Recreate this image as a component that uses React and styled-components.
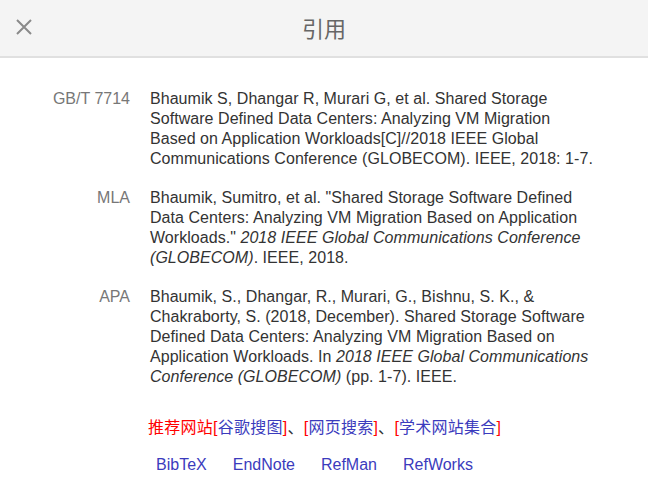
import styled, { createGlobalStyle } from "styled-components";

const GlobalStyle = createGlobalStyle`
  body {
    margin: 0;
    background: #fff;
    font-family: "Liberation Sans", Arial, "Noto Sans CJK SC", sans-serif;
  }
`;

const citations = [
  {
    label: "GB/T 7714",
    text: (
      <>
        Bhaumik S, Dhangar R, Murari G, et al. Shared Storage Software Defined
        Data Centers: Analyzing VM Migration Based on Application
        Workloads[C]//2018 IEEE Global Communications Conference (GLOBECOM).
        IEEE, 2018: 1-7.
      </>
    ),
  },
  {
    label: "MLA",
    text: (
      <>
        Bhaumik, Sumitro, et al. "Shared Storage Software Defined Data Centers:
        Analyzing VM Migration Based on Application Workloads."{" "}
        <i>2018 IEEE Global Communications Conference (GLOBECOM)</i>. IEEE,
        2018.
      </>
    ),
  },
  {
    label: "APA",
    text: (
      <>
        Bhaumik, S., Dhangar, R., Murari, G., Bishnu, S. K., & Chakraborty, S.
        (2018, December). Shared Storage Software Defined Data Centers:
        Analyzing VM Migration Based on Application Workloads. In{" "}
        <i>2018 IEEE Global Communications Conference (GLOBECOM)</i> (pp.
        1-7). IEEE.
      </>
    ),
  },
];

const exports = ["BibTeX", "EndNote", "RefMan", "RefWorks"];

const App = () => {
  return (
    <>
      <GlobalStyle />
      <Header>
        <CloseButton aria-label="close">
          <svg width="18" height="18" viewBox="0 0 18 18">
            <path
              d="M2 2 L16 16 M16 2 L2 16"
              stroke="#8a8a8a"
              strokeWidth="2"
              fill="none"
            />
          </svg>
        </CloseButton>
        <Title>引用</Title>
      </Header>
      <Body>
        <CiteList>
          {citations.map((c) => (
            <CiteRow key={c.label}>
              <Label>{c.label}</Label>
              <CiteText>{c.text}</CiteText>
            </CiteRow>
          ))}
        </CiteList>
        <Recommend>
          <Red>推荐网站[</Red>
          <Link>谷歌搜图</Link>
          <Red>]</Red>、<Red>[</Red>
          <Link>网页搜索</Link>
          <Red>]</Red>、<Red>[</Red>
          <Link>学术网站集合</Link>
          <Red>]</Red>
        </Recommend>
        <ExportRow>
          {exports.map((e) => (
            <Link key={e}>{e}</Link>
          ))}
        </ExportRow>
      </Body>
    </>
  );
};

const Header = styled.div`
  position: relative;
  height: 56px;
  background: #f4f4f4;
  border-bottom: 2px solid #e0e0e0;
  display: flex;
  align-items: center;
  justify-content: center;
`;

const CloseButton = styled.button`
  position: absolute;
  left: 15px;
  top: 18px;
  padding: 0;
  border: none;
  background: transparent;
  display: flex;
  cursor: pointer;
`;

const Title = styled.div`
  font-family: "Noto Sans CJK SC", sans-serif;
  font-size: 22px;
  color: #666;
  margin-top: -2px;
`;

const Body = styled.div`
  padding: 31px 0 0 0;
`;

const CiteList = styled.div`
  display: flex;
  flex-direction: column;
  gap: 19px;
`;

const CiteRow = styled.div`
  display: grid;
  grid-template-columns: 130px 450px;
  column-gap: 20px;
  font-size: 16px;
  line-height: 20px;
`;

const Label = styled.div`
  text-align: right;
  color: #777;
`;

const CiteText = styled.div`
  color: #333;
  letter-spacing: 0.05px;
`;

const Recommend = styled.div`
  margin: 31px 0 0 148px;
  font-size: 16px;
  line-height: 20px;
  color: #333;
  letter-spacing: 0.25px;
  font-family: "Liberation Sans", "Noto Sans CJK SC", sans-serif;
`;

const Red = styled.span`
  color: #f00;
`;

const Link = styled.a`
  color: #3b3bbd;
  cursor: pointer;
`;

const ExportRow = styled.div`
  display: flex;
  gap: 26px;
  margin: 17px 0 0 156px;
  font-size: 16px;
  line-height: 20px;
`;

export default App;
